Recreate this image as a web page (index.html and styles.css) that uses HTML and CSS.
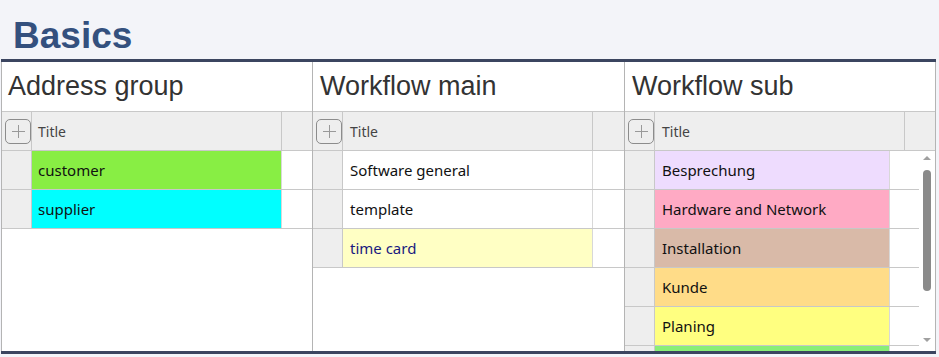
FILE: index.html
```html
<!DOCTYPE html>
<html lang="en">
<head>
    <meta charset="UTF-8">
    <title>Basics</title>
    <link rel="stylesheet" href="styles.css">
</head>
<body>
    <div class="cabecera">
        <h1>Basics</h1>
    </div>

    <div class="paneles">
        <!-- Address group -->
        <div class="panel">
            <div class="panel-titulo">Address group</div>
            <div class="tabla-cabeza">
                <div class="col-num"><span class="boton-mas"></span></div>
                <div class="col-titulo">Title</div>
                <div class="col-extra"></div>
            </div>
            <div class="tabla-cuerpo">
                <div class="filas">
                    <div class="fila"><div class="col-num"></div><div class="col-titulo" style="background-color: #88ee44;">customer</div><div class="col-extra"></div></div>
                    <div class="fila"><div class="col-num"></div><div class="col-titulo" style="background-color: #00ffff;">supplier</div><div class="col-extra"></div></div>
                </div>
            </div>
        </div>

        <!-- Workflow main -->
        <div class="panel">
            <div class="panel-titulo">Workflow main</div>
            <div class="tabla-cabeza">
                <div class="col-num"><span class="boton-mas"></span></div>
                <div class="col-titulo">Title</div>
                <div class="col-extra"></div>
            </div>
            <div class="tabla-cuerpo">
                <div class="filas">
                    <div class="fila"><div class="col-num"></div><div class="col-titulo">Software general</div><div class="col-extra"></div></div>
                    <div class="fila"><div class="col-num"></div><div class="col-titulo">template</div><div class="col-extra"></div></div>
                    <div class="fila"><div class="col-num"></div><div class="col-titulo tarjeta" style="background-color: #ffffc4;">time card</div><div class="col-extra"></div></div>
                </div>
            </div>
        </div>

        <!-- Workflow sub -->
        <div class="panel panel-ultimo">
            <div class="panel-titulo">Workflow sub</div>
            <div class="tabla-cabeza">
                <div class="col-num"><span class="boton-mas"></span></div>
                <div class="col-titulo">Title</div>
                <div class="col-extra"></div>
            </div>
            <div class="tabla-cuerpo">
                <div class="filas estrecha">
                    <div class="fila"><div class="col-num"></div><div class="col-titulo" style="background-color: #eedcfe;">Besprechung</div><div class="col-extra"></div></div>
                    <div class="fila"><div class="col-num"></div><div class="col-titulo" style="background-color: #ffaac4;">Hardware and Network</div><div class="col-extra"></div></div>
                    <div class="fila"><div class="col-num"></div><div class="col-titulo" style="background-color: #d9baa8;">Installation</div><div class="col-extra"></div></div>
                    <div class="fila"><div class="col-num"></div><div class="col-titulo" style="background-color: #ffdc88;">Kunde</div><div class="col-extra"></div></div>
                    <div class="fila"><div class="col-num"></div><div class="col-titulo" style="background-color: #ffff80;">Planing</div><div class="col-extra"></div></div>
                    <!-- siguiente fila, cortada por el borde -->
                    <div class="fila"><div class="col-num"></div><div class="col-titulo" style="background-color: #88ee77;"></div><div class="col-extra"></div></div>
                </div>
                <div class="barra">
                    <span class="flecha-arriba"></span>
                    <span class="pulgar"></span>
                    <span class="flecha-abajo"></span>
                </div>
            </div>
        </div>
    </div>
</body>
</html>
```

FILE: styles.css
```css
/* Estilos generales */
body {
    margin: 0;
    padding: 0;
    background-color: #f3f4f9;
    font-family: "Liberation Sans", Arial, sans-serif;
    width: 939px;
    height: 357px;
    overflow: hidden;
}

.cabecera {
    height: 59px;
    box-sizing: border-box;
    padding: 18px 0 0 13px;
}

.cabecera h1 {
    margin: 0;
    font-size: 37px;
    line-height: 36px;
    font-weight: bold;
    color: #34507e;
}

/* Paneles */
.paneles {
    display: grid;
    grid-template-columns: 311px 312px 1fr;
    width: 935px;
    margin-left: 1px;
    height: 295px;
    box-sizing: border-box;
    border-top: 3px solid #3b4560;
    border-bottom: 3px solid #3b4560;
    background-color: white;
}

.panel {
    border-left: 1px solid #b4b4b4;
    display: flex;
    flex-direction: column;
    overflow: hidden;
    min-width: 0;
}

.panel-ultimo {
    border-right: 1px solid #b4b4b4;
}

.panel-titulo {
    height: 49px;
    flex: none;
    border-bottom: 1px solid #c8c8c8;
    display: flex;
    align-items: center;
    padding-left: 6px;
    font-size: 27px;
    color: #333;
}

.panel + .panel .panel-titulo {
    padding-left: 7px;
}

/* Tablas */
.tabla-cabeza,
.fila {
    display: flex;
    height: 38px;
    flex: none;
    border-bottom: 1px solid #c8c8c8;
    font-family: "Noto Sans", "Open Sans", sans-serif;
}

.tabla-cabeza {
    background-color: #eeeeee;
    font-size: 14px;
    color: #444;
}

.col-num {
    width: 29px;
    flex: none;
    border-right: 1px solid #c8c8c8;
    background-color: #eeeeee;
    display: flex;
    align-items: center;
    justify-content: center;
}

.col-titulo {
    width: 243px;
    flex: none;
    padding-left: 6px;
    border-right: 1px solid #c8c8c8;
    display: flex;
    align-items: center;
    white-space: nowrap;
}

.panel + .panel .col-titulo {
    width: 242px;
    padding-left: 7px;
}

.col-extra {
    flex: 1;
}

.fila {
    font-size: 15px;
    color: #111;
}

.fila .col-titulo {
    border-right-color: #d8d8d8;
}

.tarjeta {
    color: #1a1a80;
}

.boton-mas {
    width: 24px;
    height: 23px;
    border: 1px solid #8c8c8c;
    border-radius: 5px;
    position: relative;
    margin-left: 2px;
}

.boton-mas::before,
.boton-mas::after {
    content: "";
    position: absolute;
    background-color: #999;
}

.boton-mas::before {
    left: 6px;
    top: 11px;
    width: 13px;
    height: 1px;
}

.boton-mas::after {
    left: 12px;
    top: 5px;
    width: 1px;
    height: 13px;
}

.tabla-cuerpo {
    flex: 1;
    display: flex;
    overflow: hidden;
}

.filas {
    flex: 1;
}

.panel-ultimo .estrecha .col-titulo {
    width: 227px;
}

/* Barra de desplazamiento */
.barra {
    width: 16px;
    flex: none;
    display: flex;
    flex-direction: column;
    align-items: center;
    background-color: white;
}

.flecha-arriba {
    margin-top: 5px;
    width: 0;
    height: 0;
    border-left: 4px solid transparent;
    border-right: 4px solid transparent;
    border-bottom: 4px solid #a0a0a0;
}

.pulgar {
    margin-top: 10px;
    width: 8px;
    height: 121px;
    border-radius: 4px;
    background-color: #8a8a8a;
}

.flecha-abajo {
    margin-top: auto;
    margin-bottom: 9px;
    width: 0;
    height: 0;
    border-left: 4px solid transparent;
    border-right: 4px solid transparent;
    border-top: 4px solid #a0a0a0;
}
```
